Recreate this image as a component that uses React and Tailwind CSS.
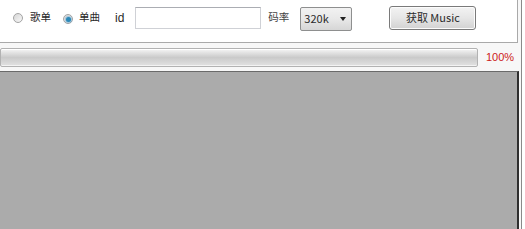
import React from "react";

function Radio({ checked }) {
  return (
    <span className="relative inline-flex h-[10px] w-[10px] shrink-0 items-center justify-center rounded-full border border-[#a4a4a4] bg-gradient-to-br from-[#d6d6d6] to-[#f8f8f8]">
      {checked && (
        <span className="h-[5px] w-[5px] rounded-full bg-[#2a88b8] shadow-[0_0_1px_1px_rgba(70,150,200,0.45)]" />
      )}
    </span>
  );
}

export default function App() {
  return (
    <div
      className="flex h-[229px] w-[525px] overflow-hidden bg-[#f7f7f7] text-[10.5px] text-[#2a2a2a]"
      style={{ fontFamily: '"Noto Sans CJK SC", "Liberation Sans", sans-serif' }}
    >
      <div className="flex w-[519px] flex-col">
        <div className="flex h-[43px] w-[518px] items-center border-b border-r border-[#a9a9a9] bg-white pb-[7px] pl-[13px]">
          <Radio />
          <span className="ml-[7px] leading-none">歌单</span>
          <span className="ml-[12px]">
            <Radio checked />
          </span>
          <span className="ml-[6px] leading-none">单曲</span>
          <span className="ml-[15px] text-[12px] leading-none" style={{ fontFamily: '"Liberation Sans", sans-serif' }}>
            id
          </span>
          <div className="ml-[11px] h-[22px] w-[126px] border border-[#cfd1d6] border-t-[#abadb3] bg-white" />
          <span className="ml-[7px] leading-none text-[#444]">码率</span>
          <div className="ml-[11px] mt-[2px] flex h-[24px] w-[52px] items-center justify-between rounded-[2px] border border-[#8e8f8f] bg-gradient-to-b from-[#f2f2f2] via-[#e8e8e8] to-[#d6d6d6] pl-[3px] pr-[5px]">
            <span className="text-[11px] leading-none">320k</span>
            <span className="h-0 w-0 border-l-[3px] border-r-[3px] border-t-[4px] border-l-transparent border-r-transparent border-t-[#222]" />
          </div>
          <div className="ml-[37px] flex h-[24px] w-[87px] items-center justify-center rounded-[3px] border border-[#7a7a7a] bg-gradient-to-b from-[#f3f3f3] via-[#e6e6e6] to-[#d2d2d2] shadow-[inset_0_0_0_1px_#fcfcfc]">
            <span className="text-[11px] leading-none">获取 Music</span>
          </div>
        </div>
        <div className="mt-[5px] flex h-[19px] items-center">
          <div className="h-[19px] w-[478px] rounded-[2px] border border-[#b2b2b2] bg-gradient-to-b from-[#f6f6f6] via-[#cacaca] to-[#e2e2e2] shadow-[inset_0_1px_0_#fff,inset_0_-1px_0_#f3f3f3]" />
          <span className="ml-[8px] text-[11px] leading-none text-[#cc2020]" style={{ fontFamily: '"Liberation Sans", sans-serif' }}>
            100%
          </span>
        </div>
        <div className="mt-[4px] flex-1 border-r-2 border-t border-r-[#2f2f2f] border-t-[#6a6a6a] bg-[#ababab]" />
      </div>
      <div className="ml-[2px] h-full w-px bg-[#8a8a8a]" />
      <div className="flex-1 bg-white" />
    </div>
  );
}
